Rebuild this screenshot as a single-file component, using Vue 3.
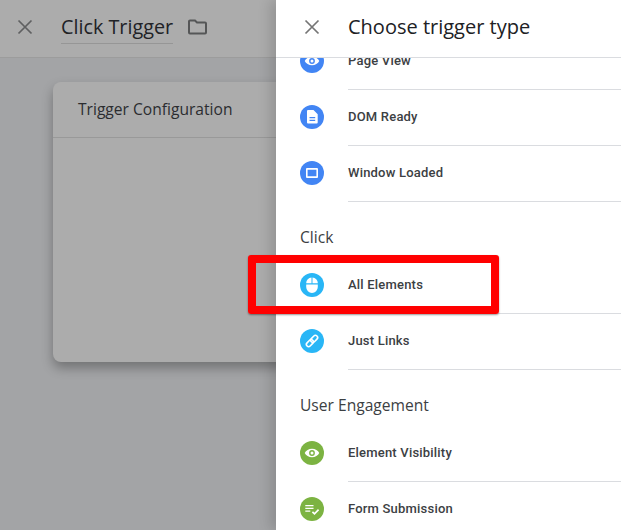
<script setup>
const rows = [
  { type: 'item', name: 'Page View', icon: 'eye', color: '#4285f4' },
  { type: 'item', name: 'DOM Ready', icon: 'doc', color: '#4285f4' },
  { type: 'item', name: 'Window Loaded', icon: 'window', color: '#4285f4' },
  { type: 'section', name: 'Click' },
  { type: 'item', name: 'All Elements', icon: 'mouse', color: '#29b6f6' },
  { type: 'item', name: 'Just Links', icon: 'link', color: '#29b6f6' },
  { type: 'section', name: 'User Engagement' },
  { type: 'item', name: 'Element Visibility', icon: 'eye', color: '#7cb342' },
  { type: 'item', name: 'Form Submission', icon: 'form', color: '#7cb342' }
]
</script>

<template>
  <div class="page">
    <div class="editor">
      <header class="editor-bar">
        <svg class="close" width="16" height="16" viewBox="0 0 16 16">
          <path d="M1.5 1.5l13 13M14.5 1.5l-13 13" stroke="#5f6061" stroke-width="1.7" fill="none" />
        </svg>
        <span class="title">Click Trigger</span>
        <svg class="folder" width="22" height="18" viewBox="0 0 22 18">
          <path d="M2 3.500a1 1 0 0 1 1-1h5l2 2h8a1 1 0 0 1 1 1v9a1 1 0 0 1-1 1H3a1 1 0 0 1-1-1z" fill="none" stroke="#555657" stroke-width="2" />
        </svg>
      </header>
      <section class="card">
        <div class="card-head">Trigger Configuration</div>
      </section>
    </div>

    <aside class="drawer">
      <header class="drawer-bar">
        <svg class="close" width="16" height="16" viewBox="0 0 16 16">
          <path d="M1.5 1.5l13 13M14.5 1.5l-13 13" stroke="#757575" stroke-width="1.7" fill="none" />
        </svg>
        <span class="drawer-title">Choose trigger type</span>
      </header>
      <div class="viewport">
        <ul class="list">
          <template v-for="row in rows" :key="row.name">
            <li v-if="row.type === 'section'" class="section">{{ row.name }}</li>
            <li v-else class="item">
              <span class="badge" :style="{ background: row.color }">
                <svg width="24" height="24" viewBox="0 0 24 24">
                  <template v-if="row.icon === 'eye'">
                    <path d="M12 7.700c-3.300 0-6 1.800-7.300 4.300 1.300 2.500 4 4.300 7.300 4.300s6-1.800 7.300-4.300c-1.300-2.500-4-4.300-7.300-4.300z" fill="#fff" />
                    <circle cx="12" cy="12" r="2.900" :fill="row.color" />
                    <circle cx="12" cy="12" r="1.500" fill="#fff" />
                  </template>
                  <path v-else-if="row.icon === 'doc'" fill="#fff" fill-rule="evenodd" d="M8 5h5.500L17.700 9.200V17.500a1 1 0 0 1-1 1H8a1 1 0 0 1-1-1V6a1 1 0 0 1 1-1zm1.500 7v1.200h5.700V12zm0 2.700v1.200h5.700v-1.200z" />
                  <path v-else-if="row.icon === 'window'" fill="#fff" fill-rule="evenodd" d="M7 7h10a1 1 0 0 1 1 1v8a1 1 0 0 1-1 1H7a1 1 0 0 1-1-1V8a1 1 0 0 1 1-1zm.6 1.800v6.400h8.800V8.800z" />
                  <template v-else-if="row.icon === 'mouse'">
                    <path fill="#fff" d="M11.500 4.600v5.700H6.200V10a5.400 5.400 0 0 1 5.300-5.400zM12.500 4.600a5.400 5.400 0 0 1 5.300 5.400v.3h-5.300zM6.200 11.400h11.600v2.700a5.800 5.800 0 0 1-11.600 0z" />
                  </template>
                  <g v-else-if="row.icon === 'link'" transform="rotate(-45 12 12)" fill="none" stroke="#fff" stroke-width="1.600">
                    <rect x="5" y="9.800" width="8" height="4.400" rx="2.200" />
                    <rect x="11" y="9.800" width="8" height="4.400" rx="2.200" />
                  </g>
                  <template v-else-if="row.icon === 'form'">
                    <path d="M5.300 8.700h8.200M5.300 11.400h8.200M5.300 14.200h5" stroke="#fff" stroke-width="1.300" fill="none" />
                    <path d="M12.400 14.800l2.100 2.100 4.100-4.200" stroke="#fff" stroke-width="1.700" fill="none" />
                  </template>
                </svg>
              </span>
              <span class="label">{{ row.name }}</span>
            </li>
          </template>
        </ul>
      </div>
    </aside>

    <div class="highlight"></div>
  </div>
</template>

<style scoped>
.page {
  position: relative;
  display: flex;
  width: 621px;
  height: 530px;
  overflow: hidden;
  background: #a3a4a6;
}

.editor {
  width: 276px;
  flex: none;
}

.editor-bar {
  display: flex;
  align-items: center;
  height: 53px;
  padding: 0 0 4px 17px;
  background: #acacac;
  border-bottom: 1px solid #9c9c9c;
}

.title {
  margin-left: 28px;
  padding: 4px 0 3px;
  border-bottom: 1px solid #969696;
  font-family: "Open Sans", sans-serif;
  font-size: 19.8px;
  line-height: 26px;
  color: #212226;
}

.folder {
  margin-left: 14px;
}

.card {
  width: 300px;
  height: 280px;
  margin: 24px 0 0 53px;
  background: #acacac;
  border-radius: 8px;
  box-shadow: 0 6px 12px rgba(0, 0, 0, 0.3);
}

.card-head {
  height: 55px;
  padding-left: 25px;
  border-bottom: 1px solid #999;
  font-family: "Open Sans", sans-serif;
  font-size: 15.6px;
  line-height: 54px;
  color: #2b2c30;
}

.drawer {
  position: relative;
  flex: 1;
  display: flex;
  flex-direction: column;
  background: #fff;
  box-shadow: -6px 0 12px rgba(0, 0, 0, 0.14);
}

.drawer-bar {
  position: relative;
  z-index: 1;
  display: flex;
  align-items: center;
  flex: none;
  height: 53px;
  padding: 0 0 4px 28px;
  background: #fff;
  border-bottom: 1px solid #dadce0;
}

.drawer-title {
  margin-left: 28px;
  font-family: "Open Sans", sans-serif;
  font-size: 20px;
  color: #202124;
}

.viewport {
  flex: 1;
  overflow: hidden;
}

.list {
  margin: -25px 0 0;
  padding: 0;
  list-style: none;
}

.section {
  height: 56px;
  padding: 24px 0 0 24px;
  box-sizing: border-box;
  font-family: "Open Sans", sans-serif;
  font-size: 15.6px;
  line-height: 24px;
  color: #3c4043;
}

.item {
  position: relative;
  display: flex;
  align-items: center;
  height: 56px;
  padding-left: 24px;
}

.item::after {
  content: "";
  position: absolute;
  left: 72px;
  right: 0;
  bottom: -1px;
  height: 1px;
  background: #dadce0;
}

.badge {
  display: block;
  width: 24px;
  height: 24px;
  flex: none;
  border-radius: 50%;
}

.badge svg {
  display: block;
}

.label {
  margin: 0 0 2px 24px;
  font-family: Roboto, sans-serif;
  font-size: 13px;
  font-weight: 500;
  letter-spacing: 0.2px;
  color: #3c4043;
}

.highlight {
  position: absolute;
  left: 248px;
  top: 255px;
  width: 251px;
  height: 59px;
  box-sizing: border-box;
  border: 8px solid #ff0000;
  border-radius: 3px;
  box-shadow: 0 1px 2px rgba(0, 0, 0, 0.4);
}
</style>
